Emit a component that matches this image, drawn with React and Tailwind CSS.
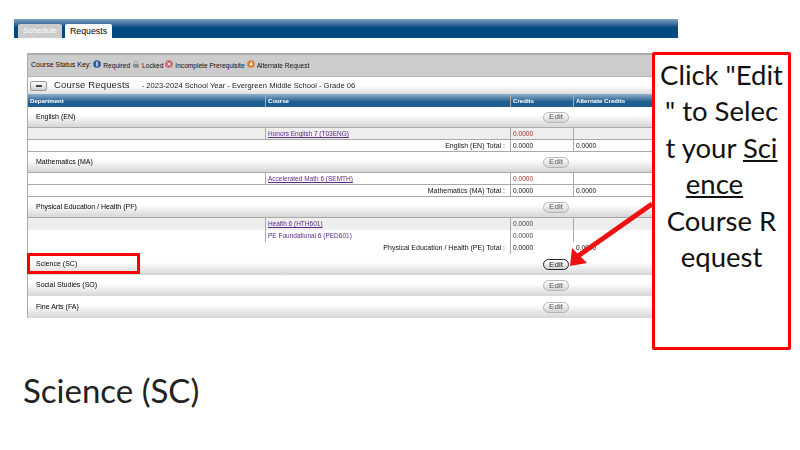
import React from 'react';

const CELL_GRID = 'grid grid-cols-[237px_245px_63px_81px]';

const EditButton = ({ active = false }) => (
  <button
    className={`w-[26px] h-[11px] rounded-full border flex items-center justify-center text-[8px] leading-none bg-gradient-to-b from-white to-[#d4d4d4] ${
      active ? 'border-[#222] text-[#222] to-[#c8d4dc]' : 'border-[#b5b5b5] text-[#555]'
    }`}
  >
    Edit
  </button>
);

const GroupRow = ({ name, height = 'h-[20px]', active = false }) => (
  <div className={`${height} flex items-center justify-between pl-[8px] pr-[84px] bg-gradient-to-b from-white from-40% to-[#d6d6d6] text-[7px] text-black`}>
    <span>{name}</span>
    <EditButton active={active} />
  </div>
);

const CourseRow = ({ course, credits, alt, shaded = false }) => (
  <div className={`${CELL_GRID} h-[12px] leading-[12px] ${shaded ? 'bg-[#eeeeee]' : 'bg-white'} border-b border-[#aaaaaa]`}>
    <span />
    <span className="border-l border-[#aaaaaa] pl-[2px] text-[6.5px] text-[#5b2a86] underline truncate">{course}</span>
    <span className="border-l border-[#aaaaaa] pl-[2px] text-[6.6px] text-[#a0302a]">{credits}</span>
    <span className="border-l border-[#aaaaaa] pl-[2px] text-[6.6px]">{alt}</span>
  </div>
);

const TotalRow = ({ label, credits, alt }) => (
  <div className={`${CELL_GRID} h-[12px] leading-[11px] bg-white border-b border-[#aaaaaa] text-[#111]`}>
    <span className="col-span-2 text-right pr-[5px] text-[7px]">{label}</span>
    <span className="border-l border-[#aaaaaa] pl-[2px] text-[6.6px]">{credits}</span>
    <span className="border-l border-[#aaaaaa] pl-[2px] text-[6.6px]">{alt}</span>
  </div>
);

const StatusIcon = ({ color, glyph }) => (
  <svg width="8" height="8" viewBox="0 0 10 10" className="mx-[2px] -mt-[3px] shrink-0">
    <circle cx="5" cy="5" r="4.8" fill={color} />
    {glyph === 'info' && <rect x="4.2" y="2" width="1.6" height="6" fill="#fff" />}
    {glyph === 'x' && <path d="M3 3l4 4M7 3l-4 4" stroke="#fff" strokeWidth="1.2" />}
    {glyph === 'flame' && <path d="M5 2.2c1.8 1.6 2 3 1.4 4.2A1.8 1.8 0 0 1 3.4 5.2C3.8 4.6 4.8 3.8 5 2.2z" fill="#fff" />}
  </svg>
);

const LockIcon = () => (
  <svg width="8" height="8" viewBox="0 0 10 10" className="mx-[2px] -mt-[3px] shrink-0">
    <path d="M3 5V3.4a2 2 0 0 1 4 0V5" fill="none" stroke="#999" strokeWidth="1" />
    <rect x="1.5" y="5" width="7" height="4.5" fill="#8a8a8a" />
  </svg>
);

const App = () => {
  return (
    <div className="relative w-[800px] h-[450px] overflow-hidden bg-white pt-[19px] pl-[14px] font-['Liberation_Sans',sans-serif]">
      {/* tab bar */}
      <div className="w-[664px] h-[19px] flex items-end gap-[3px] pl-[4px] bg-gradient-to-b from-[#7ba3c2] to-[#004a80] to-45%">
        <div className="w-[44px] h-[14px] rounded-t-[2px] bg-[#cccccc] text-white text-[8px] leading-[14px] text-center">Schedule</div>
        <div className="w-[47px] h-[14px] rounded-t-[2px] bg-white text-black text-[8.8px] leading-[14px] text-center">Requests</div>
      </div>

      {/* course panel */}
      <div className="mt-[15px] ml-[13px] w-[626px] border-l border-[#aaaaaa] blur-[0.25px]">
        <div className="h-[24px] flex items-center pl-[3px] bg-[#cccccc] border-t-2 border-b border-t-[#aaaaaa] border-b-[#b5b5b5] text-[6.6px] text-[#111]">
          <span className="text-[7px]">Course Status Key:</span>
          <StatusIcon color="#2a5d9c" glyph="info" />
          <span>Required</span>
          <LockIcon />
          <span>Locked</span>
          <StatusIcon color="#c9686a" glyph="x" />
          <span>Incomplete Prerequisite</span>
          <StatusIcon color="#d9803a" glyph="flame" />
          <span>Alternate Request</span>
        </div>

        <div className="h-[17px] flex items-center pl-[2px] bg-gradient-to-b from-white from-50% to-[#dddddd]">
          <div className="w-[17px] h-[10px] rounded-[2px] border border-[#999] bg-gradient-to-b from-white to-[#cfcfcf] flex items-center justify-center">
            <div className="w-[6px] h-[2px] bg-[#444]" />
          </div>
          <span className="ml-[7px] text-[9.5px] tracking-[0.15px] text-[#222]">Course Requests</span>
          <span className="ml-[12px] text-[7.6px] text-[#222]">- 2023-2024 School Year - Evergreen Middle School - Grade 06</span>
        </div>

        <div className={`${CELL_GRID} h-[13px] bg-gradient-to-b from-[#8fb0ca] to-[#1f5f90] to-60% text-white text-[6.1px] font-bold leading-[13px]`}>
          <span className="pl-[2px]">Department</span>
          <span className="border-l border-[#aaaaaa] pl-[2px]">Course</span>
          <span className="border-l border-[#aaaaaa] pl-[2px]">Credits</span>
          <span className="border-l border-[#aaaaaa] pl-[2px]">Alternate Credits</span>
        </div>

        <GroupRow name="English (EN)" />
        <div className="border-t border-[#aaaaaa]">
          <CourseRow course="Honors English 7 (T03ENG)" credits="0.0000" shaded />
          <TotalRow label="English (EN) Total :" credits="0.0000" alt="0.0000" />
        </div>

        <GroupRow name="Mathematics (MA)" />
        <div className="border-t border-[#aaaaaa]">
          <CourseRow course="Accelerated Math 6 (SEMTH)" credits="0.0000" />
          <TotalRow label="Mathematics (MA) Total :" credits="0.0000" alt="0.0000" />
        </div>

        <GroupRow name="Physical Education / Health (PF)" />
        <div className="border-t border-[#aaaaaa]">
          <div className={`${CELL_GRID} h-[12px] leading-[11px] bg-[#eeeeee]`}>
            <span />
            <span className="border-l border-[#aaaaaa] pl-[2px] text-[6.5px] text-[#5b2a86] underline">Health 6 (HTH601)</span>
            <span className="border-l border-[#aaaaaa] pl-[2px] text-[6.6px] text-[#444]">0.0000</span>
            <span className="border-l border-[#aaaaaa]" />
          </div>
          <div className={`${CELL_GRID} h-[12px] leading-[12px] bg-white`}>
            <span />
            <span className="border-l border-[#aaaaaa] pl-[2px] text-[6.5px] text-[#5b2a86]">PE Foundational 6 (PED601)</span>
            <span className="border-l border-[#aaaaaa] pl-[2px] text-[6.6px] text-[#444]">0.0000</span>
            <span className="border-l border-[#aaaaaa]" />
          </div>
          <div className={`${CELL_GRID} h-[12px] leading-[11px] bg-white text-[#111]`}>
            <span className="col-span-2 text-right pr-[5px] text-[7px]">Physical Education / Health (PE) Total :</span>
            <span className="border-l border-[#aaaaaa] pl-[2px] text-[6.6px]">0.0000</span>
            <span className="pl-[3px] text-[6.6px]">0.0000</span>
          </div>
        </div>

        <GroupRow name="Science (SC)" height="h-[21px]" active />
        <GroupRow name="Social Studies (SO)" height="h-[21px]" />
        <GroupRow name="Fine Arts (FA)" height="h-[22px]" />
      </div>

      <h1 className="ml-[9px] mt-[52px] font-['Lato',sans-serif] font-normal text-[33px] leading-[40px] text-[#222]">Science (SC)</h1>

      {/* annotations over the screenshot */}
      <div className="absolute left-[27px] top-[253px] w-[113px] h-[21px] border-[3px] border-[#ff0000]" />

      <svg className="absolute left-[560px] top-[190px]" width="100" height="85" viewBox="0 0 100 85">
        <path d="M92 14L18 66" stroke="#ee1111" strokeWidth="5" fill="none" />
        <path d="M10 76L12 58L27 73z" fill="#ee1111" />
      </svg>

      <div className="absolute left-[652px] top-[52px] w-[139px] h-[298px] rounded-[2px] border-[3px] border-[#ff0000] bg-white pt-[2px] font-['Lato',sans-serif] text-[27.5px] leading-[36.4px] text-[#111] text-center">
        <div>Click "Edit</div>
        <div>" to Selec</div>
        <div>t your <span className="underline">Sci</span></div>
        <div className="pr-[7px]"><span className="underline">ence</span>&nbsp;</div>
        <div>Course R</div>
        <div>equest</div>
      </div>
    </div>
  );
};

export default App;
